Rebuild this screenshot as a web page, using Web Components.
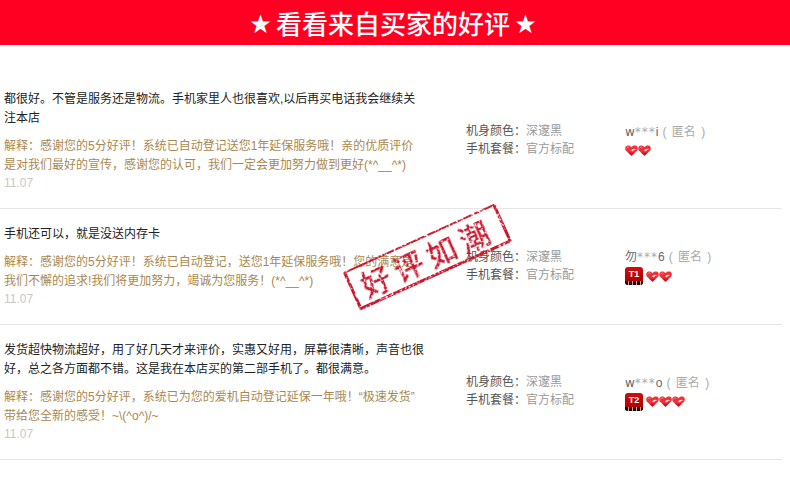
<!DOCTYPE html>
<html lang="zh">
<head>
<meta charset="utf-8">
<title>买家好评</title>
<style>
  body {
    margin: 0;
    background: #fff;
    font-family: "Liberation Sans", "Noto Sans CJK SC", sans-serif;
  }
</style>
</head>
<body>

<review-page>
  <review-row
    name-head="w" name-tail="i" grade="" hearts="2"
    date="11.07">
    <span slot="comment">都很好。不管是服务还是物流。手机家里人也很喜欢,以后再买电话我会继续关<br>注本店</span>
    <span slot="reply">解释：感谢您的5分好评！系统已自动登记送您1年延保服务哦！亲的优质评价<br>是对我们最好的宣传，感谢您的认可，我们一定会更加努力做到更好(*^__^*)</span>
  </review-row>
  <review-row
    name-head="勿" name-tail="6" grade="T1" hearts="2"
    date="11.07">
    <span slot="comment">手机还可以，就是没送内存卡</span>
    <span slot="reply">解释：感谢您的5分好评！系统已自动登记，送您1年延保服务哦！您的满意是<br>我们不懈的追求!我们将更加努力，竭诚为您服务！(*^__^*)</span>
  </review-row>
  <review-row
    name-head="w" name-tail="o" grade="T2" hearts="3"
    date="11.07">
    <span slot="comment">发货超快物流超好，用了好几天才来评价，实惠又好用，屏幕很清晰，声音也很<br>好，总之各方面都不错。这是我在本店买的第二部手机了。都很满意。</span>
    <span slot="reply">解释：感谢您的5分好评，系统已为您的爱机自动登记延保一年哦！“极速发货”<br>带给您全新的感受！~\(^o^)/~</span>
  </review-row>
  <good-stamp>好评如潮</good-stamp>
</review-page>

<script>
  class ReviewPage extends HTMLElement {
    constructor() {
      super();
      this.attachShadow({ mode: 'open' });
      this.shadowRoot.innerHTML = `
        <style>
          :host {
            display: block;
            position: relative;
            height: 488px;
            overflow: hidden;
          }
          header {
            display: flex;
            justify-content: center;
            align-items: center;
            gap: 5px;
            height: 45px;
            padding-right: 4px;
            background: #ff0022;
            color: #fff;
            font: 500 26px/45px "Noto Sans CJK SC", sans-serif;
          }
          .star { font-size: 21px; }
          .list {
            width: 782px;
            margin-top: 29px;
          }
        </style>
        <header><span class="star">★</span><span>看看来自买家的好评</span><span class="star">★</span></header>
        <div class="list"><slot></slot></div>
      `;
    }
  }

  class ReviewRow extends HTMLElement {
    constructor() {
      super();
      this.attachShadow({ mode: 'open' });
    }

    connectedCallback() {
      const grade = this.getAttribute('grade');
      const count = Number(this.getAttribute('hearts'));
      const hearts = '<buyer-heart></buyer-heart>'.repeat(count);
      const badge = grade ? `<grade-badge>${grade}</grade-badge>` : '';

      this.shadowRoot.innerHTML = `
        <style>
          :host {
            display: grid;
            grid-template-columns: 466px 159px 1fr;
            align-items: center;
            padding: 16px 0;
            border-bottom: 1px solid #e6e6e6;
            font-size: 12px;
            line-height: 18px;
          }
          .text { padding-left: 4px; white-space: nowrap; }
          .comment { color: #222; line-height: 19px; }
          .reply { margin-top: 9px; color: #a9884f; line-height: 19px; }
          .date { margin-top: -1px; color: #c8c8c8; }
          .spec { color: #555; margin-top: -2px; }
          .spec span { color: #999; }
          .user {
            color: #666;
            font-family: "DejaVu Sans", "Noto Sans CJK SC", sans-serif;
            white-space: nowrap;
          }
          .name { display: flex; }
          .stars { color: #aaa; letter-spacing: 1px; }
          .tail { font-family: "Liberation Sans", sans-serif; }
          .anon {
            margin-left: 4px;
            color: #aaa;
            font-family: "Liberation Sans", "Noto Sans CJK SC", sans-serif;
            word-spacing: 2px;
            white-space: pre;
          }
          .marks {
            display: flex;
            align-items: center;
            height: 18px;
            margin-top: 1px;
          }
          grade-badge { margin-right: 3px; }
        </style>
        <div class="text">
          <div class="comment"><slot name="comment"></slot></div>
          <div class="reply"><slot name="reply"></slot></div>
          <div class="date">${this.getAttribute('date')}</div>
        </div>
        <div class="spec">
          <div>机身颜色：<span>深邃黑</span></div>
          <div>手机套餐：<span>官方标配</span></div>
        </div>
        <div class="user">
          <div class="name"><span>${this.getAttribute('name-head')}</span><span class="stars">***</span><span class="tail">${this.getAttribute('name-tail')}</span><span class="anon">( 匿名 )</span></div>
          <div class="marks">${badge}${hearts}</div>
        </div>
      `;
    }
  }

  class BuyerHeart extends HTMLElement {
    constructor() {
      super();
      this.attachShadow({ mode: 'open' });
      this.shadowRoot.innerHTML = `
        <style>
          :host { display: block; width: 13px; height: 11px; }
          svg { display: block; }
        </style>
        <svg width="13" height="11" viewBox="0 0 13 11">
          <path d="M6.5 10.8 L0.8 5.4 C-0.4 3.8 0.1 1 2.6 0.6 C4.2 0.4 5.6 1 6.5 2.2 C7.4 1 8.8 0.4 10.4 0.6 C12.9 1 13.4 3.6 12.2 5.4 Z" fill="#ee3038"/>
          <path d="M6.5 10.8 L3 7.4 L10 7.4 Z" fill="#d3141e"/>
          <path d="M6.2 5.6 C7 3.6 9.6 3 11.4 4.4 C10 4.4 8.8 4.8 8.2 6 C7.6 6.6 6.6 6.4 6.2 5.6 Z" fill="#fff" opacity="0.9"/>
          <path d="M1.6 3.4 C2 2.2 3.2 1.6 4.4 2.2" stroke="#ff9c9c" stroke-width="0.8" fill="none"/>
        </svg>
      `;
    }
  }

  class GradeBadge extends HTMLElement {
    constructor() {
      super();
      this.attachShadow({ mode: 'open' });
      this.shadowRoot.innerHTML = `
        <style>
          :host {
            display: flex;
            flex-direction: column;
            width: 18px;
            height: 18px;
            border-radius: 3px;
            overflow: hidden;
            background: linear-gradient(#d40a0a, #a80000);
            color: #fff;
            font: bold 9px/13px "Liberation Sans", sans-serif;
            text-align: center;
          }
          .label { flex: 1; padding-top: 1px; }
          .strip {
            height: 4px;
            background: repeating-linear-gradient(90deg, #1c0303 0 3px, #c9a6a6 3px 4px);
          }
        </style>
        <div class="label"><slot></slot></div>
        <div class="strip"></div>
      `;
    }
  }

  class GoodStamp extends HTMLElement {
    constructor() {
      super();
      this.attachShadow({ mode: 'open' });
      this.shadowRoot.innerHTML = `
        <style>
          :host {
            position: absolute;
            left: 344px;
            top: 236px;
            width: 167px;
            height: 42px;
            transform: rotate(-24.4deg);
          }
          .box {
            box-sizing: border-box;
            height: 100%;
            border: solid #c8142c;
            border-width: 2px 3px 3px 3px;
            border-radius: 2px;
            color: #c8142c;
            font: 500 30px/36px "Noto Sans CJK SC", sans-serif;
            letter-spacing: 6px;
            text-align: center;
            white-space: nowrap;
            filter: url(#worn);
          }
        </style>
        <svg width="0" height="0" style="position:absolute">
          <filter id="worn" x="0" y="0" width="100%" height="100%">
            <feTurbulence type="fractalNoise" baseFrequency="0.45" numOctaves="2" seed="4" result="noise"/>
            <feColorMatrix in="noise" type="matrix" values="0 0 0 0 0  0 0 0 0 0  0 0 0 0 0  0 0 0 -7 4.9" result="mask"/>
            <feComposite in="SourceGraphic" in2="mask" operator="in"/>
          </filter>
        </svg>
        <div class="box"><slot></slot></div>
      `;
    }
  }

  customElements.define('review-page', ReviewPage);
  customElements.define('review-row', ReviewRow);
  customElements.define('buyer-heart', BuyerHeart);
  customElements.define('grade-badge', GradeBadge);
  customElements.define('good-stamp', GoodStamp);
</script>
</body>
</html>
